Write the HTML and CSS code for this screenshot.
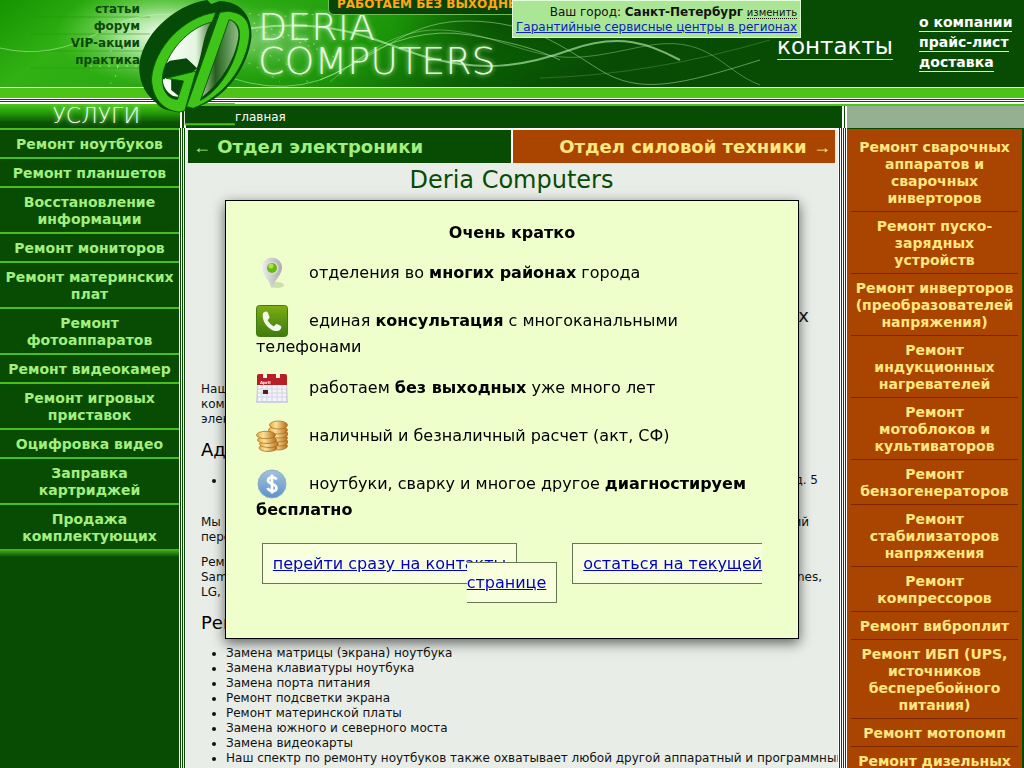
FILE: index.html
```html
<!DOCTYPE html>
<html lang="ru">
<head>
<meta charset="utf-8">
<title>Deria Computers</title>
<link rel="stylesheet" href="styles.css">
</head>
<body>
<div class="page">
  <header class="header">
    <svg class="header-art" viewBox="0 0 1024 87" preserveAspectRatio="xMinYMin slice" aria-hidden="true">
      <defs>
        <linearGradient id="sky" x1="0" x2="1" y1="0" y2=".12">
          <stop offset="0" stop-color="#169300"/><stop offset=".12" stop-color="#32b114"/><stop offset=".3" stop-color="#27a510"/><stop offset=".42" stop-color="#1c9409"/><stop offset=".55" stop-color="#0a5f03"/><stop offset=".66" stop-color="#084c04"/>
        </linearGradient>
        <radialGradient id="glow"><stop offset="0" stop-color="#fff"/><stop offset=".4" stop-color="#c8f5bc" stop-opacity=".75"/><stop offset="1" stop-color="#5fd040" stop-opacity="0"/></radialGradient>
        <radialGradient id="shade"><stop offset="0" stop-color="#053d02" stop-opacity=".6"/><stop offset="1" stop-color="#053d02" stop-opacity="0"/></radialGradient>
      </defs>
      <rect width="1024" height="87" fill="url(#sky)"/>
      <ellipse cx="500" cy="20" rx="110" ry="42" fill="url(#shade)"/>
      <ellipse cx="165" cy="35" rx="110" ry="52" fill="url(#glow)"/>
      <ellipse cx="265" cy="40" rx="85" ry="40" fill="url(#glow)" opacity=".3"/>
      <path d="M30 17H150M30 34H150M30 51H150M30 68H150" stroke="#229609" stroke-width="2" opacity=".25"/>
      <g fill="none" stroke="#c9f7bf">
        <path d="M0 48Q50 60 100 32T210 20" opacity=".5"/>
        <path d="M240 30C340 14 380 45 430 58S520 68 570 50S650 44 680 60" stroke-width="2" opacity=".6"/>
        <path d="M320 80C390 50 410 20 470 21S560 45 600 70S680 85 760 60" opacity=".45"/>
        <path d="M330 82C400 20 440 23 500 42S570 62 640 47S720 70 760 85" opacity=".35"/>
        <path d="M210 70Q290 105 350 65T470 35T560 60" opacity=".5"/>
        <path d="M540 78Q650 75 770 40" opacity=".2"/>
      </g>
      <g fill="none" stroke="#d9ffd0" stroke-dasharray="2 7" opacity=".6">
        <path d="M240 12Q290 22 350 8"/><path d="M238 28Q290 34 340 60"/><path d="M235 46Q280 52 310 84"/><path d="M110 50Q125 68 110 84"/><path d="M90 66H140"/><path d="M232 56Q255 64 280 82"/><path d="M245 20L320 46"/>
      </g>
    </svg>
    <nav class="topics">
      <a href="#">статьи</a><a href="#">форум</a><a href="#">VIP-акции</a><a href="#">практика</a>
    </nav>
    <div class="brand"><span>DERIA</span><span>COMPUTERS</span></div>
    <a class="daily" href="#">РАБОТАЕМ БЕЗ ВЫХОДНЫХ</a>
    <div class="city">
      <div>Ваш город: <b>Санкт-Петербург</b> <a class="change" href="#">изменить</a></div>
      <a href="#">Гарантийные сервисные центры в регионах</a>
    </div>
    <a class="contacts" href="#">контакты</a>
    <nav class="company">
      <a href="#">о компании</a><a href="#">прайс-лист</a><a href="#">доставка</a>
    </nav>
    <svg class="logo" viewBox="400 0 320 390" aria-hidden="true">
      <defs><linearGradient id="hole" x1="0" x2="1"><stop offset="0" stop-color="#fff"/><stop offset=".45" stop-color="#e2f5de"/><stop offset=".7" stop-color="#245f1c"/><stop offset="1" stop-color="#8fbf85"/></linearGradient></defs>
      <path d="M555 318H705V375H555Z" fill="#084c04"/>
      <path d="M560 309H705V314H560ZM555 370H705V376H555Z" fill="#4cc417"/>
      <path d="M622 0C520 15 420 110 418 205C420 255 440 285 470 310C490 334 520 337 560 330L600 318C680 290 745 200 755 110C757 50 725 5 660 3L634 12Z" fill="#064a08"/>
      <path d="M640 58C565 70 492 155 485 225C488 258 500 278 520 288L560 295L600 295C665 250 710 170 716 105C715 75 700 58 670 55Z" fill="url(#hole)"/>
      <path d="M640 58C605 105 612 160 585 220L545 298L600 305L685 60Z" fill="#0a4d09"/>
      <path d="M480 205L510 182L560 175L592 205L556 238H486ZM514 228L560 225L545 295L514 270Z" fill="#07480a"/>
      <path d="M495 235L512 232L510 262L497 255Z" fill="#efffe9"/>
      <path d="M648 37C550 50 463 145 455 235C455 290 488 334 540 336L555 332L589 213L499 235L551 243L533 298C500 298 485 265 488 228C499 158 565 82 637 66Z" fill="#3fc51a" stroke="#0b5d08" stroke-width="3"/>
      <path d="M686 34C740 40 755 72 747 125C730 210 670 290 580 325L560 320L660 37ZM688 59L602 301C665 268 713 180 719 109C720 80 710 65 688 59Z" fill="#3fc51a" fill-rule="evenodd" stroke="#0b5d08" stroke-width="3"/>
    </svg>
  </header>
  <div class="stripes"></div>
  <div class="crumbs">
    <div class="services">УСЛУГИ</div>
    <div class="crumb-path"><a href="#">главная</a></div>
    <div class="crumb-side"></div>
  </div>
  <div class="columns">
    <nav class="left">
      <a href="#">Ремонт ноутбуков</a><a href="#">Ремонт планшетов</a><a href="#">Восстановление информации</a><a href="#">Ремонт мониторов</a><a href="#">Ремонт материнских плат</a><a href="#">Ремонт фотоаппаратов</a><a href="#">Ремонт видеокамер</a><a href="#">Ремонт игровых приставок</a><a href="#">Оцифровка видео</a><a href="#">Заправка картриджей</a><a href="#">Продажа комплектующих</a>
      <div class="left-end"></div>
    </nav>
    <main class="main">
      <div class="tabs"><a class="tab" href="#"><span class="arrow">←</span> Отдел электроники</a><a class="tab tab-power" href="#">Отдел силовой техники <span class="arrow">→</span></a></div>
      <h1>Deria Computers</h1>
      <div class="article">
        <div class="lead">ремонт в удобных районах</div>
        <p>Наша компания выполняет ремонт<br>компьютеров, ноутбуков и другой<br>электроники</p>
        <h2>Адреса</h2>
        <ul class="places"><li><div class="row"><span>Санкт-Петербург</span><span>д. 5</span></div></li></ul>
        <div class="para"><div class="row short"><span>Мы проводим ремонт</span><span>бывший</span></div>переносной техники</div>
        <div class="para">Ремонт ноутбуков всех марок<div class="row"><span>Samsung, Asus, Acer</span><span>Bliss, Bones,</span></div>LG, Sony</div>
        <h2>Ремонт ноутбуков</h2>
        <ul class="works">
          <li>Замена матрицы (экрана) ноутбука</li><li>Замена клавиатуры ноутбука</li><li>Замена порта питания</li><li>Ремонт подсветки экрана</li><li>Ремонт материнской платы</li><li>Замена южного и северного моста</li><li>Замена видеокарты</li><li>Наш спектр по ремонту ноутбуков также охватывает любой другой аппаратный и программный</li>
        </ul>
      </div>
    </main>
    <nav class="right">
      <a href="#">Ремонт сварочных аппаратов и сварочных инверторов</a><a href="#">Ремонт пуско-зарядных устройств</a><a href="#">Ремонт инверторов (преобразователей напряжения)</a><a href="#">Ремонт индукционных нагревателей</a><a href="#">Ремонт<br>мотоблоков и культиваторов</a><a href="#">Ремонт бензогенераторов</a><a href="#">Ремонт стабилизаторов напряжения</a><a href="#">Ремонт компрессоров</a><a href="#">Ремонт виброплит</a><a href="#">Ремонт ИБП (UPS, источников бесперебойного питания)</a><a href="#">Ремонт мотопомп</a><a href="#">Ремонт дизельных генераторов</a>
    </nav>
  </div>
</div>
<section class="modal" role="dialog" aria-labelledby="brief">
  <h3 id="brief">Очень кратко</h3>
  <p><svg class="icon" viewBox="0 0 32 32" aria-hidden="true"><defs><linearGradient id="pin" x1="0" x2="1"><stop offset="0" stop-color="#eee"/><stop offset="1" stop-color="#a9adab"/></linearGradient></defs><ellipse cx="21" cy="28" rx="7" ry="3" fill="#b9c99a" opacity=".6"/><path d="M16 32C14 23 6 18 6 10.500A10 10 0 0 1 26 10.500C26 18 18 23 16 32Z" fill="url(#pin)"/><circle cx="16" cy="11" r="6.500" fill="#d9dcda"/><circle cx="16" cy="11" r="5" fill="#67b915"/><circle cx="15" cy="9" r="2.500" fill="#a9e54b"/></svg> отделения во <b>многих районах</b> города</p>
  <p><svg class="icon" viewBox="0 0 32 32" aria-hidden="true"><defs><linearGradient id="call" x2="0" y2="1"><stop offset="0" stop-color="#7fae14"/><stop offset=".5" stop-color="#5b9412"/><stop offset="1" stop-color="#3d7c0c"/></linearGradient></defs><rect x=".5" y=".5" width="31" height="31" rx="3" fill="url(#call)" stroke="#407b12"/><path d="M7 8C9 6 11 6 12 8L13.500 12C14 14 11 14 12 16Q14 19 17 21C19 22 19 19 21 19L25 21C26 22 25 25 22 26C14 27 5 17 7 8Z" fill="#f2f7ea"/></svg> единая <b>консультация</b> с многоканальными телефонами</p>
  <p><svg class="icon" viewBox="0 0 32 32" aria-hidden="true"><path d="M1 12H31L32 31H0Z" fill="#cbd1dd"/><path d="M2 13H30V29H2Z" fill="#f3f3f7"/><path d="M2 17H30M2 21H30M2 25H30M6 13V29M11 13V29M16 13V29M21 13V29M26 13V29" stroke="#d2d4e0"/><rect x="7" y="18" width="5" height="4" fill="#512020"/><path d="M1 4Q1 2 3 2H29Q31 2 31 4V13H1Z" fill="#b51f25"/><path d="M9 1V6M22 1V6" stroke="#f5f5e8" stroke-width="4"/><text x="4" y="12" class="month">April</text></svg> работаем <b>без выходных</b> уже много лет</p>
  <p><svg class="icon" viewBox="0 0 32 32" aria-hidden="true"><defs><linearGradient id="gold"><stop offset="0" stop-color="#e9a83a"/><stop offset=".35" stop-color="#fbe39a"/><stop offset="1" stop-color="#b66b18"/></linearGradient></defs><g fill="url(#gold)" stroke="#a56517" stroke-width=".7"><ellipse cx="22" cy="26" rx="9.500" ry="4"/><ellipse cx="23" cy="22" rx="9" ry="4"/><ellipse cx="22" cy="18" rx="9.500" ry="4"/><ellipse cx="23" cy="14" rx="9" ry="4"/><ellipse cx="22" cy="10" rx="9.500" ry="4"/><ellipse cx="22.500" cy="5" rx="9" ry="4"/><ellipse cx="12" cy="28" rx="9" ry="3.500"/><ellipse cx="13" cy="24" rx="9.500" ry="3.500"/><ellipse cx="11" cy="20" rx="9.500" ry="3.500"/><ellipse cx="10" cy="15" rx="9.500" ry="3.700"/></g></svg> наличный и безналичный расчет (акт, СФ)</p>
  <p><svg class="icon" viewBox="0 0 32 32" aria-hidden="true"><defs><linearGradient id="coin" x2="0" y2="1"><stop offset="0" stop-color="#a3c3dd"/><stop offset="1" stop-color="#5d92c8"/></linearGradient></defs><circle cx="16" cy="16" r="14" fill="url(#coin)" stroke="#8eaec8"/><path d="M20.500 11.500C19 8.500 12 8.500 12 12.500S20.500 15.500 20.500 20S13 23.500 11.500 20M16 6.500V25.500" fill="none" stroke="#fff" stroke-width="2.700"/></svg> ноутбуки, сварку и многое другое <b>диагностируем бесплатно</b></p>
  <div class="actions"><a href="#">перейти сразу на контакты</a> <a class="stay" href="#">остаться на текущей странице</a></div>
</section>
</body>
</html>
```
FILE: styles.css
```css
* { box-sizing: border-box; }
body { margin: 0; background: #084c04; color: #111; font: 12px/15px Verdana, "DejaVu Sans", sans-serif; }
.page { height: 100vh; overflow: hidden; display: flex; flex-direction: column; }
.header { position: relative; height: 87px; flex: none; display: flex; background: #084c04; z-index: 2; }
.header a { color: inherit; }
.header-art { position: absolute; top: 0; left: 0; width: 100%; height: 87px; }
.topics { position: relative; width: 140px; padding-top: 1px; display: flex; flex-direction: column; text-align: right; font-weight: bold; line-height: 17px; color: #0a4a05; }
.topics a, .company a, .contacts { text-decoration: none; }
.brand { position: absolute; left: 258px; top: 10px; display: flex; flex-direction: column; font: 200 38px/34px "DejaVu Sans", sans-serif; color: #e4fbdc; text-shadow: 0 0 5px #c8ffb8; }
.daily { position: absolute; left: 328px; top: -6px; padding: 2px 8px; border: 1px solid #6cbf55; border-radius: 6px; background: #0b4506; font-weight: bold; white-space: nowrap; text-decoration: none; }
.header .daily { color: #ffa814; }
.city { position: absolute; left: 50%; top: 0; height: 38px; padding: 4px 3px; border: 1px solid #e4ffdc; background: #aae693; text-align: right; white-space: nowrap; }
.header .city > a { color: #0b21c5; }
.city .change { font-size: 10px; text-decoration: none; border-bottom: 1px dotted #111; }
.contacts { position: relative; margin: 33px 26px 0 auto; height: 27px; font-size: 23px; line-height: 26px; border-bottom: 1px solid #b8dfb0; }
.header .contacts { color: #fff; }
.company { position: relative; width: 105px; padding-top: 14px; display: flex; flex-direction: column; align-items: flex-start; gap: 2px; font-size: 14px; font-weight: bold; line-height: 17px; color: #fff; white-space: nowrap; }
.company a { border-bottom: 1px solid #d9f0d4; }
.logo { position: absolute; left: 133px; top: 0; width: 107px; height: 130px; overflow: visible; }
.stripes { flex: none; height: 19px; background: linear-gradient(#fff 0 1px, #4cc417 1px 11px, #fff 11px 12px, #084c04 12px 13px, #fff 13px 14px, #084c04 14px 15px, #fff 15px 17px, #4cc417 17px 19px); }
.crumbs { flex: none; display: flex; height: 22px; }
.services { width: 180px; padding-right: 40px; text-align: right; background: linear-gradient(#41bd16, #229609 35%, #0b5304 75%, #084c04); color: #efffe9; font: 200 22px/19px "DejaVu Sans", sans-serif; text-shadow: 0 0 4px #c8ffb8; }
.crumb-path { flex: 1; padding-left: 49px; border-left: 6px double #fff; border-right: 5px double #fff; line-height: 22px; background: #084c04; }
.crumb-path a { color: #fff; text-decoration: none; }
.crumb-side { width: 177px; background: #94b090; }
.columns { flex: 1; min-height: 0; display: flex; }
.left { flex: none; width: 179px; text-align: center; font-size: 14px; font-weight: bold; line-height: 17px; }
.left a { display: block; padding: 6px 2px 4px; border-top: 2px solid #49be1c; color: #a2ef7d; text-decoration: none; }
.left-end { height: 8px; background: linear-gradient(#49be1c, #084c04); }
.main { flex: 1; min-width: 0; background: #e8ede8; border-top: 2px solid #fff; position: relative; padding: 0 12px 0 9px; }
.main::before, .main::after { content: ""; position: absolute; top: -2px; bottom: 0; width: 7px; background: repeating-linear-gradient(90deg, #fff 0 1px, #084c04 1px 2px); }
.main::before { left: 0; }
.main::after { right: 0; width: 9px; }
.tabs { display: grid; grid-template-columns: 1fr 1fr; gap: 2px; background: #fff; }
.tab { padding: 6px 4px 6px 5px; background: #084c04; color: #a2ef7d; font-size: 18px; font-weight: bold; line-height: 21px; text-decoration: none; white-space: nowrap; }
.tab-power { background: #a94500; color: #ffe680; text-align: right; }
.arrow { font-family: "Liberation Serif", serif; font-weight: normal; line-height: 1; }
h1 { margin: 2px 0 0; color: #084c04; font-size: 24px; line-height: 30px; font-weight: normal; text-align: center; }
.article { padding: 0 11px 0 13px; }
.lead { margin: 110px 15px 55px; font-size: 18px; line-height: 22px; text-align: right; }
.article p { margin: 0; }
h2 { margin: 12px 0; font-size: 18px; line-height: 22px; font-weight: normal; color: #000; }
ul { margin: 0; padding-left: 25px; }
.row { display: flex; justify-content: space-between; padding-right: 2px; }
.short { padding-right: 15px; }
.places { margin-bottom: 27px; }
.places .row { padding-right: 6px; }
.works { margin-right: -12px; white-space: nowrap; }
.para { margin-bottom: 10px; }
.right { flex: none; width: 177px; padding: 4px 4px 0; border: solid #084c04; border-width: 1px 2px 0 0; background: #a94500; text-align: center; font-size: 14px; font-weight: bold; line-height: 17px; }
.right a { display: block; padding: 6px 2px 4px; border-bottom: 1px solid #7c2500; color: #ffe680; text-decoration: none; }
.modal { position: fixed; z-index: 5; top: 200px; left: 0; right: 0; margin: 0 auto; width: 574px; max-width: 100%; padding: 22px 30px 46px; border: 1px solid #000; background: #eeffcc; box-shadow: 0 4px 12px rgba(0,0,0,.6); color: #000; font-size: 16px; line-height: 19px; }
.modal h3 { margin: 0 0 15px; font-size: 16px; text-align: center; }
.modal p { margin: 0 0 16px; }
.icon { width: 32px; height: 32px; margin-right: 16px; vertical-align: middle; }
.month { fill: #fff; font: bold 4px "DejaVu Sans", sans-serif; }
.actions { padding-top: 19px; text-align: center; }
.actions a { padding: 10px; border: 1px solid #667755; background: #f8ffdc; color: #0000cc; }
.actions .stay { margin-left: 50px; }
```
